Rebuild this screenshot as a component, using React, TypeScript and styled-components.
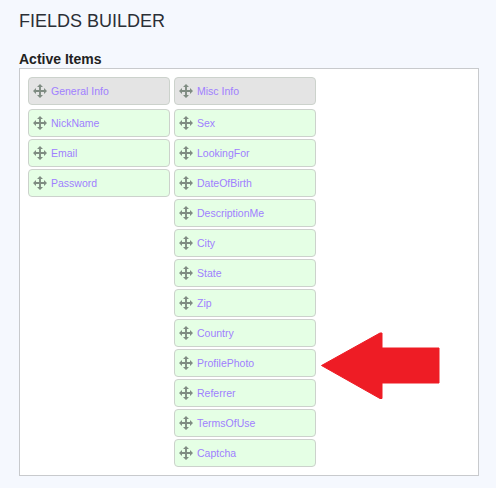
import React from "react";
import styled, { createGlobalStyle } from "styled-components";

const GlobalStyle = createGlobalStyle`
  html, body {
    margin: 0;
    padding: 0;
    background-color: #f5f8fe;
  }
`;

const Page = styled.div`
  width: 496px;
  height: 488px;
  box-sizing: border-box;
  padding: 11px 17px 0 19px;
  overflow: hidden;
  font-family: "Liberation Sans", Arial, sans-serif;
`;

const Title = styled.h1`
  margin: 0;
  font-size: 18px;
  line-height: 21px;
  font-weight: normal;
  color: #2b2f36;
`;

const SectionLabel = styled.div`
  margin-top: 19px;
  font-size: 14px;
  line-height: 17px;
  font-weight: bold;
  color: #222;
`;

const Panel = styled.div`
  position: relative;
  box-sizing: border-box;
  height: 408px;
  padding: 8px;
  display: flex;
  align-items: flex-start;
  gap: 4px;
  background: #fff;
  border: 1px solid #c8cacd;
`;

const Column = styled.div`
  width: 142px;
  display: flex;
  flex-direction: column;
  gap: 2px;
`;

const Item = styled.div<{ $head?: boolean }>`
  box-sizing: border-box;
  height: 28px;
  margin-bottom: ${(p) => (p.$head ? "2px" : "0")};
  padding-left: 4px;
  display: flex;
  align-items: center;
  gap: 4px;
  background: ${(p) => (p.$head ? "#e4e4e4" : "#e5ffe5")};
  border: 1px solid #ccd2cc;
  border-radius: 4px;
  font-size: 10.5px;
  color: #a080ff;
`;

const MoveSvg = styled.svg`
  flex: none;
`;

const Arrow = styled.svg`
  position: absolute;
  left: 300px;
  top: 263px;
`;

const MoveIcon = () => (
  <MoveSvg width="14" height="14" viewBox="0 0 14 14">
    <path d="M7 1.500v11M1.500 7h11" stroke="#7f8c82" strokeWidth="1.900" fill="none" />
    <path
      d="M7 0L4 3h6zM7 14l-3-3h6zM0 7l3-3v6zM14 7l-3-3v6z"
      fill="#7f8c82"
    />
  </MoveSvg>
);

const general = ["NickName", "Email", "Password"];
const misc = [
  "Sex",
  "LookingFor",
  "DateOfBirth",
  "DescriptionMe",
  "City",
  "State",
  "Zip",
  "Country",
  "ProfilePhoto",
  "Referrer",
  "TermsOfUse",
  "Captcha",
];

const App = () => {
  return (
    <Page>
      <GlobalStyle />
      <Title>FIELDS BUILDER</Title>
      <SectionLabel>Active Items</SectionLabel>
      <Panel>
        <Column>
          <Item $head>
            <MoveIcon />
            General Info
          </Item>
          {general.map((name) => (
            <Item key={name}>
              <MoveIcon />
              {name}
            </Item>
          ))}
        </Column>
        <Column>
          <Item $head>
            <MoveIcon />
            Misc Info
          </Item>
          {misc.map((name) => (
            <Item key={name}>
              <MoveIcon />
              {name}
            </Item>
          ))}
        </Column>
        <Arrow width="120" height="68" viewBox="0 0 120 68">
          <path
            d="M1.500 33.500L60 1h2v15h57v35H62v15.500h-2z"
            fill="#ee1c25"
            stroke="#ee1c25"
            strokeLinejoin="round"
          />
        </Arrow>
      </Panel>
    </Page>
  );
};

export default App;
